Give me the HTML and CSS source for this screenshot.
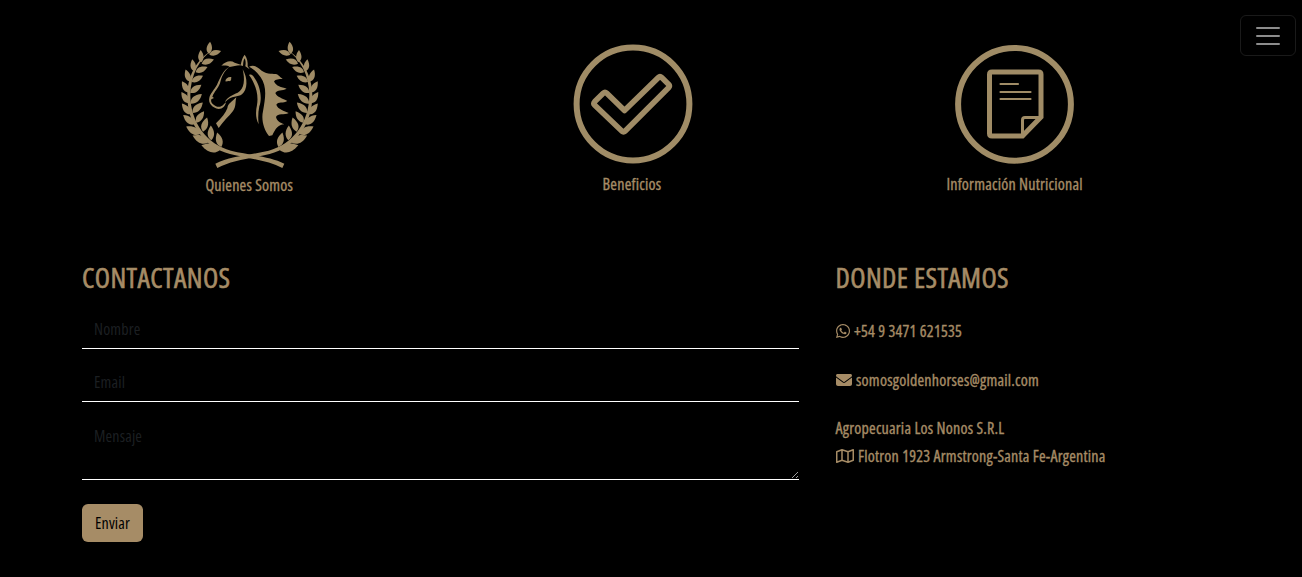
FILE: index.html
```html
<!DOCTYPE html>
<html lang="es">
<head>
<meta charset="utf-8">
<title>Golden Horses</title>
<link rel="stylesheet" href="styles.css">
</head>
<body>
<button class="toggler" aria-label="Menú"><svg width="30" height="30" viewBox="0 0 30 30"><path d="M4 7h22M4 15h22M4 23h22" stroke="#fff" stroke-opacity=".55" stroke-width="2" stroke-linecap="round"/></svg></button>
<nav class="links">
  <a class="link">
    <svg class="crest" viewBox="0 0 450 405" fill="currentColor">
      <defs>
        <path id="leaf" d="M0 0C-11-8-12-21 0-37C10-23 10-10 0 0Z"/>
        <g id="branch">
          <path d="M112 46C73 72 47 120 46 180C46 262 96 328 168 347C226 361 286 364 328 386L322 399C278 375 220 371 165 357C86 337 36 265 37 180C38 118 69 70 112 46Z"/>
          <use href="#leaf" transform="translate(102 57) rotate(5)"/>
          <use href="#leaf" transform="translate(79 82) rotate(-3)"/>
          <use href="#leaf" transform="translate(58 109) rotate(-10)"/>
          <use href="#leaf" transform="translate(45 140) rotate(-20) scale(1.05)"/>
          <use href="#leaf" transform="translate(42 173) rotate(-32) scale(1.08)"/>
          <use href="#leaf" transform="translate(43 205) rotate(-35) scale(1.12)"/>
          <use href="#leaf" transform="translate(48 238) rotate(-40) scale(1.15)"/>
          <use href="#leaf" transform="translate(59 268) rotate(-51) scale(1.2)"/>
          <use href="#leaf" transform="translate(76 297) rotate(-62) scale(1.3)"/>
          <use href="#leaf" transform="translate(101 322) rotate(-67) scale(1.42)"/>
          <use href="#leaf" transform="translate(136 344) rotate(-77) scale(1.58)"/>
          <use href="#leaf" transform="translate(103 59) rotate(73)"/>
          <use href="#leaf" transform="translate(80 86) rotate(71) scale(1.05)"/>
          <use href="#leaf" transform="translate(62 112) rotate(66) scale(1.05)"/>
          <use href="#leaf" transform="translate(50 141) rotate(61) scale(1.05)"/>
          <use href="#leaf" transform="translate(46 174) rotate(53) scale(1.12)"/>
          <use href="#leaf" transform="translate(47 206) rotate(49) scale(1.2)"/>
          <use href="#leaf" transform="translate(53 234) rotate(44) scale(1.18)"/>
          <use href="#leaf" transform="translate(64 263) rotate(34) scale(1.12)"/>
          <use href="#leaf" transform="translate(84 290) rotate(16) scale(1.2)"/>
          <use href="#leaf" transform="translate(109 316) rotate(-2) scale(1.2)"/>
          <use href="#leaf" transform="translate(139 336) rotate(-16) scale(1.22)"/>
        </g>
      </defs>
      <use href="#branch"/>
      <use href="#branch" transform="translate(449 0) scale(-1 1)"/>
      <path d="M139 92C151 79 167 75 179 83C187 85 194 88 201 91C185 90 176 94 164 96C160 92 150 91 139 92Z"/>
      <path d="M197 91C199 78 203 66 209 59C216 68 219 81 218 94L224 103L211 94C213 84 212 76 209 70C204 78 205 86 204 93Z"/>
      <path d="M166 94C143 106 136 129 126 149C118 164 106 174 103 188C99 205 112 218 131 222C143 222 151 213 153 202L147 207C142 214 132 218 123 214C113 208 106 202 109 193L117 189L112 185C119 168 128 162 135 145C140 126 146 108 166 94Z"/>
      <path d="M151 139C152 130 159 125 169 126C168 132 170 135 165 139C160 136 156 140 151 139Z"/>
      <path d="M203 103C219 129 218 165 201 178C190 187 169 180 150 202C155 186 173 180 188 173C209 162 210 133 203 103Z"/>
      <path d="M184 187C180 202 184 214 174 228C162 244 145 258 131 279L123 265C140 249 152 234 157 220C159 205 170 201 184 187Z"/>
      <path d="M222 120C228 117 233 119 240 131C256 154 262 189 253 214C249 233 249 252 251 268C241 249 242 229 246 210C252 176 239 143 222 120Z"/>
      <path d="M222 95C233 90 242 92 253 101C272 119 289 115 302 117C312 119 314 127 323 131C311 133 302 132 297 139C303 154 319 157 335 161C321 168 307 164 301 174C306 187 323 190 337 198C325 206 309 199 304 209C308 223 328 227 341 234C328 241 308 234 303 246C306 259 316 263 328 268C309 269 301 282 292 301L282 303C267 284 258 255 264 229C271 188 277 157 257 127C247 111 236 103 222 95Z"/>
    </svg>
    <span>Quienes Somos</span>
  </a>
  <a class="link">
    <svg class="round check" viewBox="0 0 120 120" fill="none" stroke="currentColor"><circle cx="60" cy="60" r="56.4" stroke-width="6"/><path d="M30.2 49.2 21.8 57.5Q20 59.5 21.8 61.3L48.800 87.1Q50.5 88.5 52.2 87.1L95.5 43.8Q97.2 42 95.5 40.2L88.7 33.6Q87 32 85.3 33.6L51.5 66.5 33.8 49.2Q32 47.5 30.2 49.2Z" stroke-width="5.6" stroke-linejoin="round"/></svg>
    <span>Beneficios</span>
  </a>
  <a class="link">
    <svg class="round" viewBox="0 0 120 120" fill="none" stroke="currentColor"><circle cx="59.500" cy="60.3" r="56.4" stroke-width="6"/><path d="M37 28H83.5Q86 28 86 30.5V73L67.5 92H37Q34.5 92 34.5 89.5V30.5Q34.5 28 37 28Z" stroke-width="5"/><path d="M67.5 91V76Q67.5 73.5 70 73.5H86" stroke-width="3"/><path d="M45.5 40H63M45.5 48H75.5M45.5 55H75.5" stroke-width="2.2" stroke-linecap="round"/></svg>
    <span>Información Nutricional</span>
  </a>
</nav>
<main class="content">
  <section class="contact">
    <h2>CONTACTANOS</h2>
    <form>
      <input type="text" placeholder="Nombre">
      <input type="email" placeholder="Email">
      <textarea placeholder="Mensaje"></textarea>
      <button class="send" type="button">Enviar</button>
    </form>
  </section>
  <section class="where">
    <h2>DONDE ESTAMOS</h2>
    <p class="phone"><svg width="14" height="16" viewBox="0 0 448 512" fill="currentColor"><path d="M380.9 97.1C339 55.1 283.2 32 223.9 32c-122.4 0-222 99.6-222 222 0 39.1 10.2 77.3 29.6 111L0 480l117.7-30.9c32.4 17.7 68.9 27 106.1 27h.1c122.3 0 224.1-99.6 224.1-222 0-59.3-25.2-115-67.1-157zm-157 341.6c-33.2 0-65.7-8.9-94-25.7l-6.7-4-69.8 18.3L72 359.2l-4.4-7c-18.5-29.4-28.2-63.3-28.2-98.2 0-101.7 82.8-184.5 184.6-184.5 49.3 0 95.6 19.2 130.4 54.1 34.8 34.9 56.2 81.2 56.1 130.5 0 101.8-84.9 184.6-186.6 184.6zm101.2-138.2c-5.5-2.8-32.8-16.2-37.9-18-5.1-1.9-8.8-2.8-12.5 2.8-3.7 5.6-14.3 18-17.6 21.8-3.2 3.7-6.5 4.2-12 1.4-32.6-16.3-54-29.1-75.5-66-5.7-9.8 5.7-9.1 16.3-30.3 1.8-3.7.9-6.9-.5-9.7-1.4-2.8-12.5-30.1-17.1-41.2-4.5-10.8-9.1-9.3-12.5-9.5-3.2-.2-6.9-.2-10.6-.2-3.7 0-9.7 1.4-14.8 6.9-5.1 5.600-19.4 19-19.4 46.3 0 27.3 19.9 53.7 22.6 57.4 2.8 3.7 39.1 59.7 94.8 83.8 35.2 15.2 49 16.5 66.6 13.9 10.7-1.6 32.8-13.4 37.4-26.4 4.6-13 4.6-24.1 3.2-26.4-1.3-2.5-5-3.9-10.5-6.6z"/></svg>+54 9 3471 621535</p>
    <p class="mail"><svg width="16" height="16" viewBox="0 0 512 512" fill="currentColor"><path d="M48 64C21.500 64 0 85.500 0 112c0 15.100 7.100 29.300 19.200 38.400L236.800 313.600c11.400 8.500 27 8.500 38.400 0L492.800 150.400c12.100-9.100 19.200-23.300 19.200-38.400 0-26.500-21.500-48-48-48H48zM0 176V384c0 35.300 28.700 64 64 64H448c35.300 0 64-28.700 64-64V176L294.400 339.200c-22.800 17.100-54 17.100-76.800 0L0 176z"/></svg>somosgoldenhorses@gmail.com</p>
    <p>Agropecuaria Los Nonos S.R.L</p>
    <p><svg width="18" height="16" viewBox="0 0 576 512" fill="none" stroke="currentColor" stroke-width="48" stroke-linejoin="round"><path d="M24 120 192 56 384 120 552 56V392L384 456 192 392 24 456ZM192 56V392M384 120V456"/></svg>Flotron 1923 Armstrong-Santa Fe-Argentina</p>
  </section>
</main>
</body>
</html>
```
FILE: styles.css
```css
* { box-sizing: border-box; }
body {
  margin: 0;
  height: 577px;
  overflow: hidden;
  background: #000;
  color: #a68c66;
  font: 400 16px/24px "Open Sans", "Noto Sans", sans-serif;
  font-stretch: 75%;
}
.toggler {
  position: absolute;
  top: 15px;
  left: 1240px;
  width: 56px;
  height: 41px;
  padding: 5px 12px;
  background: none;
  border: 1px solid rgba(255, 255, 255, .1);
  border-radius: 6px;
}
.toggler svg { display: block; }
.links {
  display: grid;
  grid-template-columns: repeat(3, 382.67px);
  padding: 35px 0 0 58px;
  height: 260px;
}
.link { display: flex; flex-direction: column; align-items: center; }
.link span, .where p { letter-spacing: .225px; -webkit-text-stroke: .35px currentColor; }
.crest { width: 150px; height: 135px; margin: 0 0 3px 1px; color: #a08c66; }
.round { width: 120px; height: 120px; margin: 9px 0 8px 1px; color: #a08c66; }
.check { margin-left: 2px; }
.content {
  display: grid;
  grid-template-columns: 717px 1fr;
  column-gap: 36.5px;
  padding-left: 82px;
}
h2 {
  margin: 0;
  font-size: 28px;
  line-height: 34px;
  font-weight: 400;
  letter-spacing: .4px;
  -webkit-text-stroke: .6px currentColor;
}
form { display: flex; flex-direction: column; padding-top: 16px; }
input, textarea, .send { font: inherit; font-stretch: 75%; letter-spacing: .15px; }
input, textarea {
  display: block;
  width: 717px;
  height: 39px;
  padding: 6px 12px;
  margin: 0 0 14px;
  background: transparent;
  border: 0;
  border-bottom: 1px solid #fff;
  border-radius: 0;
  color: #fff;
}
textarea { height: 63px; padding-top: 7px; margin: 1px 0 24px; }
::placeholder { color: #212529; opacity: .85; }
.send {
  align-self: flex-start;
  height: 38px;
  padding: 0 13px;
  border: 0;
  border-radius: 6px;
  background: #a68c66;
  color: #000;
}
.where p { display: flex; align-items: center; gap: 4.5px; margin: 0; height: 28px; }
.where .phone { margin: 23px 0 21px; }
.where .mail { margin-bottom: 20px; }
```
